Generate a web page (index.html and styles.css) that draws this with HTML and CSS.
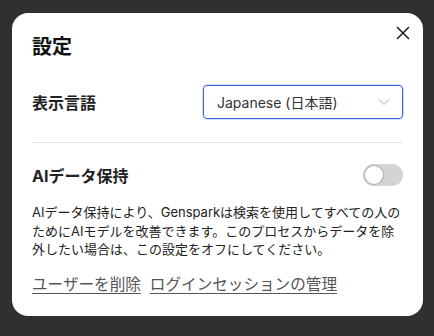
FILE: index.html
```html
<!DOCTYPE html>
<html>
<head>
    <title>設定</title>
    <link rel="stylesheet" href="styles.css">
</head>
<body>
    <div class="modal">
        <button class="close-btn" aria-label="閉じる">
            <svg width="14" height="14" viewBox="0 0 14 14"><path d="M1.5 1.5L12.5 12.5M12.5 1.5L1.5 12.5" stroke="#222" stroke-width="1.6" stroke-linecap="round"/></svg>
        </button>
        <h2 class="modal-title">設定</h2>

        <div class="setting-row">
            <span class="setting-label">表示言語</span>
            <div class="lang-select">
                <span>Japanese (日本語)</span>
                <svg width="12" height="8" viewBox="0 0 12 8"><path d="M1 1.5L6 6.5L11 1.5" fill="none" stroke="#ccc" stroke-width="1.2"/></svg>
            </div>
        </div>

        <div class="section">
            <div class="setting-row toggle-row">
                <span class="setting-label">AIデータ保持</span>
                <span class="toggle"><span class="knob"></span></span>
            </div>
            <p class="desc">AIデータ保持により、Gensparkは検索を使用してすべての人のためにAIモデルを改善できます。このプロセスからデータを除外したい場合は、この設定をオフにしてください。</p>
            <div class="links">
                <a href="#">ユーザーを削除</a>
                <a href="#">ログインセッションの管理</a>
            </div>
        </div>
    </div>
</body>
</html>
```

FILE: styles.css
```css
html, body {
    margin: 0;
    height: 100%;
}

body {
    background-color: #303030;
    font-family: Inter, "Noto Sans CJK JP", sans-serif;
    color: #222;
    padding: 13px 11px 0 12px;
    box-sizing: border-box;
}

.modal {
    position: relative;
    background-color: #fff;
    border-radius: 16px;
    padding: 20px 20px 19px;
    width: 371px;
}

.close-btn {
    position: absolute;
    top: 13px;
    right: 13px;
    background: none;
    border: none;
    padding: 0;
    width: 14px;
    height: 14px;
    cursor: pointer;
}

.modal-title {
    margin: 0 0 24px;
    font-size: 20px;
    line-height: 28px;
    font-weight: 700;
    color: #111;
}

.setting-row {
    display: flex;
    align-items: center;
    justify-content: space-between;
}

.setting-label {
    font-size: 16px;
    font-weight: 700;
    color: #222;
}

.lang-select {
    width: 200px;
    height: 34px;
    box-sizing: border-box;
    border: 1px solid #3d5fd6;
    border-radius: 4px;
    box-shadow: 0 0 0 1px #d6ddf7;
    display: flex;
    align-items: center;
    justify-content: space-between;
    padding: 0 12px 0 13px;
    font-size: 14px;
    color: #333;
}

.section {
    margin-top: 23px;
    border-top: 1px solid #e8e8e8;
    padding-top: 20px;
}

.toggle {
    width: 40px;
    height: 22px;
    border-radius: 11px;
    background-color: #d4d4d4;
    display: flex;
    align-items: center;
    padding: 0 2px;
    box-sizing: border-box;
}

.toggle .knob {
    width: 18px;
    height: 18px;
    border-radius: 50%;
    background-color: #fff;
    box-shadow: 0 0 1px 1px rgba(0, 0, 0, 0.18);
}

.desc {
    margin: 16px 0 0;
    font-size: 13px;
    line-height: 18.7px;
    color: #222;
}

.links {
    margin-top: 14px;
    display: flex;
    gap: 9px;
    line-height: 24px;
}

.links a {
    font-size: 15.6px;
    color: #555;
    text-decoration: underline;
    text-underline-offset: 3px;
}
```
